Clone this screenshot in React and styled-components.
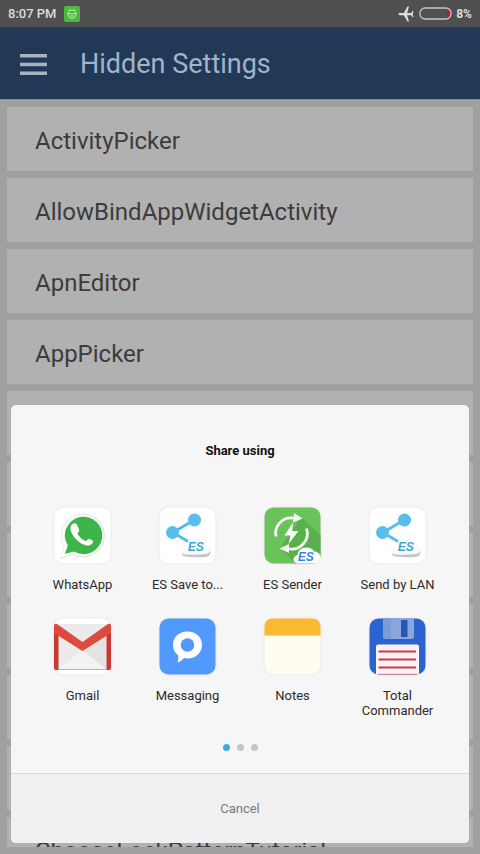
import React from 'react';
import styled, { createGlobalStyle } from 'styled-components';
import { MdAirplanemodeActive } from 'react-icons/md';

const activities = [
    'ActivityPicker',
    'AllowBindAppWidgetActivity',
    'ApnEditor',
    'AppPicker',
    '',
    '',
    '',
    '',
    '',
    '',
    'ChooseLockPatternTutorial',
];

const apps = [
    { name: 'WhatsApp', Icon: WhatsAppIcon },
    { name: 'ES Save to...', Icon: EsShareIcon },
    { name: 'ES Sender', Icon: EsSenderIcon },
    { name: 'Send by LAN', Icon: EsShareIcon },
    { name: 'Gmail', Icon: GmailIcon },
    { name: 'Messaging', Icon: MessagingIcon },
    { name: 'Notes', Icon: NotesIcon },
    { name: 'Total Commander', Icon: CommanderIcon },
];

export default function App() {
    return (
        <>
            <GlobalStyle />
            <Screen>
                <StatusBar>
                    <span>8:07 PM</span>
                    <AndroidBadge />
                    <StatusRight>
                        <Plane />
                        <BatteryIcon />
                        <Percent>8%</Percent>
                    </StatusRight>
                </StatusBar>
                <Header>
                    <MenuButton aria-label="Menu">
                        <svg width="27" height="21" viewBox="0 0 27 21" fill="#a9b2bf">
                            <rect width="27" height="3.500" />
                            <rect y="8.700" width="27" height="3.500" />
                            <rect y="17.500" width="27" height="3.500" />
                        </svg>
                    </MenuButton>
                    <h1>Hidden Settings</h1>
                </Header>
                <List>
                    {activities.map((a, i) => <Row key={i}>{a}</Row>)}
                </List>
                <Overlay>
                    <Sheet role="dialog" aria-labelledby="share-title">
                        <SheetTitle id="share-title">Share using</SheetTitle>
                        <AppGrid>
                            {apps.map(({ name, Icon }) => (
                                <AppButton key={name}>
                                    <Icon />
                                    <span>{name}</span>
                                </AppButton>
                            ))}
                        </AppGrid>
                        <Dots>
                            <Dot $active />
                            <Dot />
                            <Dot />
                        </Dots>
                        <CancelButton>Cancel</CancelButton>
                    </Sheet>
                </Overlay>
            </Screen>
        </>
    );
}

function AndroidBadge() {
    return (
        <svg width="16" height="16" viewBox="0 0 16 16">
            <rect width="16" height="16" rx="2" fill="#4bb83c" />
            <g fill="none" stroke="#b4eaa8" strokeWidth="1">
                <path d="M4 7.500a4 3.600 0 0 1 8 0v1a4 3.800 0 0 1-8 0z" />
                <path d="M3 7.700h10M5 3l1 1.600M11 3l-1 1.600M6 10h4" />
            </g>
        </svg>
    );
}

function BatteryIcon() {
    return (
        <svg width="33" height="13" viewBox="0 0 33 13">
            <path d="M28 1.500q3.500 1 3.500 5t-3.500 5z" fill="#b3202c" />
            <rect x="1" y="1" width="31" height="11" rx="5" fill="none" stroke="#c4c4c4" strokeWidth="1.300" />
        </svg>
    );
}

function Tile({ fill, children }) {
    return (
        <TileSvg viewBox="0 0 57 57" aria-hidden="true">
            <rect x=".5" y=".5" width="56" height="56" rx="9" fill={fill} />
            {children}
        </TileSvg>
    );
}

function EsText({ x, y, size, fill }) {
    return (
        <text x={x} y={y} fontSize={size} fill={fill} fontFamily="'Liberation Sans', sans-serif" fontWeight="700" fontStyle="italic">ES</text>
    );
}

function WhatsAppIcon() {
    return (
        <Tile fill="#fff">
            <path d="M6 52l3.500-13A22 22 0 1 1 18.500 48z" fill="#e4e4e4" />
            <path d="M6.500 50.500l3.500-12A21 21 0 1 1 18.500 47z" fill="#fafafa" />
            <path d="M11 46.800l2.800-8.300A18.700 18.700 0 1 1 20 44.500z" fill="#3cb54a" />
            <path d="M19.500 16.500q2.300-.8 3.300 1l2.300 5q.4 1.400-1 2.900-.9.900-.3 1.900 2.800 4.700 7.400 6.500 1 .3 1.700-.5 1-1.500 2-1.500 3 1 4.200 2.200c-.3 3.500-3.800 5-7.300 4.300C24.500 36.500 17 28.500 16.400 21.500q.2-4 3.100-5z" fill="#fff" />
        </Tile>
    );
}

function EsShareIcon() {
    return (
        <Tile fill="#fff">
            <path d="M35 13L14 25.500l15 9" fill="none" stroke="#58bdea" strokeWidth="3" />
            <circle cx="35.500" cy="13" r="6.500" fill="#58bdea" />
            <circle cx="13.500" cy="25.500" r="6.500" fill="#58bdea" />
            <path d="M26 49.500q-3.500-1-3-4l4-3 20-1q5 1 4.500 4-.5 4-5 4.500-10 .8-20.500-.5z" fill="#c6c6c6" />
            <path d="M27 47.500q-4.500-.5-4.500-3 .5-2.500 4.500-3 0-8 8-9.500 9-1 12 5.500 4.500 1 4.500 5-.5 4-5 4.500-10 1-19.500.500z" fill="#fafafa" />
            <EsText x="29" y="44" size="12" fill="#3fa3d2" />
        </Tile>
    );
}

function EsSenderIcon() {
    return (
        <Tile fill="#6ac25a">
            <path d="M37 10l19.500 18v19.500q0 9-9 9H31L16 41l11-16z" fill="#5bb04d" />
            <path d="M12 29.500A15.500 15.500 0 0 1 29.500 11" fill="none" stroke="#f2faef" strokeWidth="2.800" />
            <path d="M42.500 21.500A15.500 15.500 0 0 1 24 41.500" fill="none" stroke="#f2faef" strokeWidth="2.800" />
            <path d="M30 6l8.500 5.500L29 15.500zM25 37l-9.500 4.500L25 46z" fill="#f2faef" />
            <path d="M29 15.500L20.500 28.500h6L24.500 37l10-13h-6.300z" fill="#fff" />
            <path d="M33 56.500q-5-2-3-6 1-2 3.500-2.500 1-7.500 9-7.500 6 .3 7.500 4 5 0 6.500 4.500-.5 7.500-9 7.500z" fill="#fff" />
            <EsText x="34" y="54" size="12" fill="#3187e0" />
        </Tile>
    );
}

function GmailIcon() {
    return (
        <Tile fill="#fff">
            <path d="M1 6h55v45H1z" fill="#ebebeb" />
            <path d="M4.500 51L28.500 32 52.500 51z" fill="#f3f3f3" />
            <path d="M28.500 32L52 18v33z" fill="#e3e3e3" />
            <path d="M4.500 51.500h48" stroke="#b5b5b5" />
            <path d="M0 8h4.500v44H2q-2 0-2-2zM52.500 8H57v42q0 2-2 2h-2.500z" fill="#c9392f" />
            <path d="M0 8q0-3 3-2l25.500 18L54 6q3-1 3 2v7L28.500 33 0 15z" fill="#dd4b3e" />
        </Tile>
    );
}

function MessagingIcon() {
    return (
        <Tile fill="#5199fb">
            <path d="M28.500 13.500c8.500 0 14.500 5.600 14.500 13.300S37 40.500 28.500 40.500q-2 0-3.500-.4-2.500 3.500-6.500 4.400 1.300-3.500.7-7Q14 33.500 14 26.800c0-7.700 6-13.300 14.500-13.300z" fill="#fff" />
            <circle cx="28.500" cy="27" r="6.800" fill="#5199fb" />
        </Tile>
    );
}

function NotesIcon() {
    return (
        <Tile fill="#fffcf0">
            <path d="M.5 17.500v-8q0-9 9-9h38q9 0 9 9v8z" fill="#fbb833" />
        </Tile>
    );
}

function CommanderIcon() {
    return (
        <Tile fill="#2c64cf">
            <path d="M14 .5h31V19q0 2-2 2H16q-2 0-2-2z" fill="#8ba6dc" />
            <path d="M14 .5h8V21h-6q-2 0-2-2z" fill="#7c9ad6" />
            <rect x="32" y="2" width="6.500" height="17" fill="#2856b8" />
            <path d="M9 26.500h39q2 0 2 2v28H9.500L7 56V28.500q0-2 2-2z" fill="#fbf3f4" />
            <path d="M9.500 33.500h37.500M9.500 41.500h37.500M9.500 49.500h37.500" stroke="#cc3b44" strokeWidth="1.800" />
            <path d="M9 56.300h39" stroke="#d87a86" />
        </Tile>
    );
}

const GlobalStyle = createGlobalStyle`
    * {
        box-sizing: border-box;
    }
    body {
        margin: 0;
        font-family: Roboto, sans-serif;
    }
    button {
        border: 0;
        padding: 0;
        background: none;
        font-family: inherit;
        cursor: pointer;
    }
`;

const Screen = styled.div`
    position: relative;
    height: 100vh;
    display: flex;
    flex-direction: column;
    overflow: hidden;
    background: #a0a0a0;
`;

const StatusBar = styled.div`
    flex: none;
    display: flex;
    align-items: center;
    gap: 7px;
    height: 27px;
    padding: 0 8px;
    background: #505050;
    color: #dcdcdc;
    font-size: 13px;
    font-weight: 500;
`;

const StatusRight = styled.div`
    display: flex;
    align-items: center;
    gap: 4px;
    margin-left: auto;
`;

const Plane = styled(MdAirplanemodeActive)`
    width: 18px;
    height: 18px;
    transform: rotate(-90deg);
`;

const Percent = styled.span`
    font-size: 12px;
    font-weight: 700;
`;

const Header = styled.header`
    flex: none;
    display: flex;
    align-items: center;
    gap: 33px;
    height: 73px;
    padding: 2px 20px 0;
    background: #213857;
    border-bottom: 1px solid #7f8c99;
    h1 {
        margin: 0;
        font-size: 27px;
        font-weight: 400;
        color: #a3b4c8;
    }
`;

const MenuButton = styled.button`
    display: flex;
`;

const List = styled.ul`
    flex: 1;
    min-height: 0;
    display: flex;
    flex-direction: column;
    gap: 7px;
    margin: 7px;
    padding: 0;
    overflow: hidden;
    list-style: none;
`;

const Row = styled.li`
    flex: none;
    height: 64px;
    padding: 0 28px;
    background: #b1b1b1;
    color: #3c3c3c;
    font-size: 24px;
    line-height: 68px;
`;

const Overlay = styled.div`
    position: absolute;
    inset: 0;
    display: flex;
    align-items: flex-end;
    padding: 11px;
`;

const Sheet = styled.section`
    flex: 1;
    overflow: hidden;
    border-radius: 5px;
    background: #f6f6f6;
`;

const SheetTitle = styled.h2`
    margin: 0;
    padding: 38px 0 48px;
    font-size: 13px;
    line-height: 16px;
    font-weight: 700;
    text-align: center;
    color: #111;
`;

const AppGrid = styled.div`
    display: grid;
    grid-template-columns: repeat(4, 1fr);
    row-gap: 26px;
    padding: 0 19px;
`;

const AppButton = styled.button`
    display: flex;
    flex-direction: column;
    align-items: center;
    gap: 13px;
    color: #2b2b2b;
    font-size: 13px;
    line-height: 15px;
    span {
        padding: 0 8px;
    }
`;

const TileSvg = styled.svg`
    width: 57px;
    height: 57px;
    filter: drop-shadow(0 0 1px rgba(0, 0, 0, 0.1));
`;

const Dots = styled.div`
    display: flex;
    justify-content: center;
    gap: 7px;
    padding: 26px 0 22px;
`;

const Dot = styled.span`
    width: 7px;
    height: 7px;
    border-radius: 50%;
    background: ${(props) => (props.$active ? '#41a8d8' : '#c6c6c6')};
`;

const CancelButton = styled.button`
    display: block;
    width: 100%;
    height: 70px;
    border-top: 1px solid #d8d8d8;
    background: #f0f0f0;
    color: #7a7a7a;
    font-size: 13px;
`;
